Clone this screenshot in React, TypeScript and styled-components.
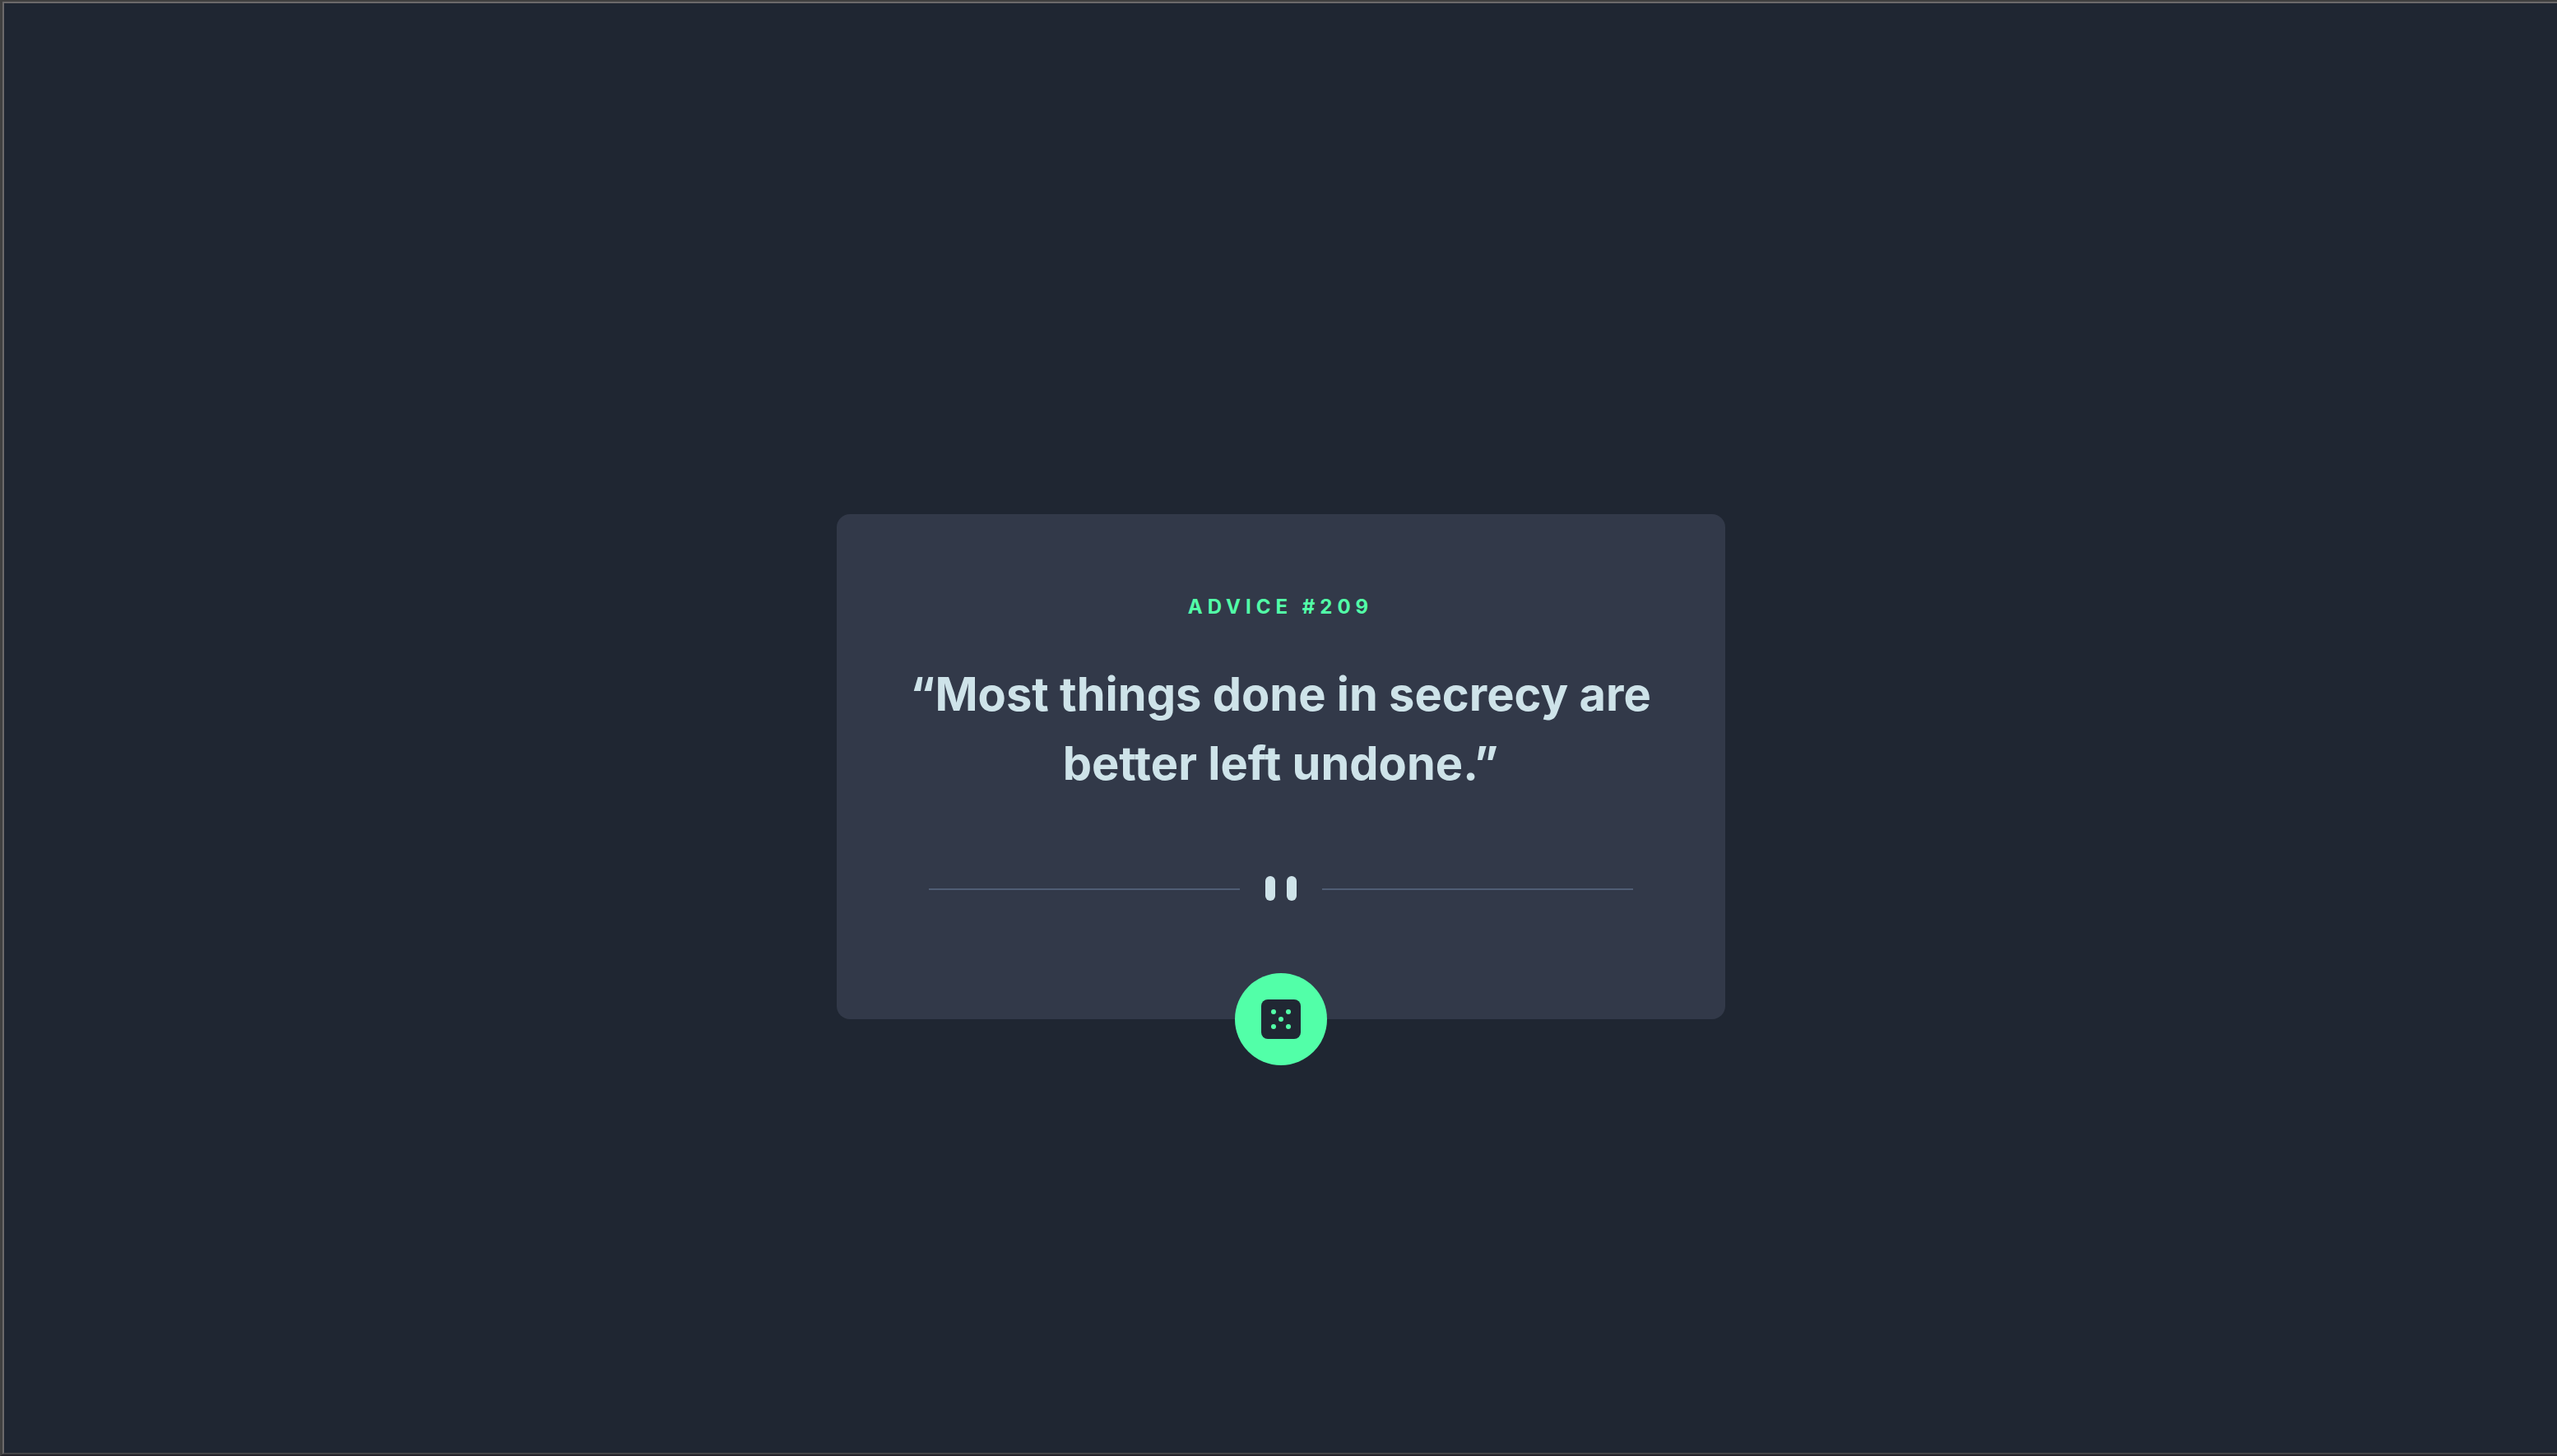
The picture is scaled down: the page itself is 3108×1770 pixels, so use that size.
import React from "react";
import styled, { createGlobalStyle } from "styled-components";

const GlobalStyle = createGlobalStyle`
  *, *::before, *::after { box-sizing: border-box; }
  body { margin: 0; background: #1f2632; font-family: Inter, "Noto Sans", sans-serif; }
`;

const Frame = styled.div`
  display: flex;
  min-height: 100vh;
  border-style: solid;
  border-width: 2px 0 2px 3px;
  border-color: #404040 transparent #24232a #404040;
`;

const Page = styled.main`
  flex: 1;
  display: flex;
  align-items: center;
  justify-content: center;
  padding-top: 94px;
  background: #1f2632;
  border-style: solid;
  border-width: 2px 0 2px 2px;
  border-color: #6b696a transparent #434446 #6b696a;
`;

const Card = styled.article`
  display: flex;
  flex-direction: column;
  align-items: center;
  width: 100%;
  max-width: 1080px;
  padding: 97px 80px 0;
  border-radius: 16px;
  background: #323949;
  text-align: center;
`;

const Label = styled.h1`
  margin: 0;
  color: #52ffa8;
  font-size: 24px;
  font-weight: 700;
  line-height: 32px;
  letter-spacing: 6px;
  text-transform: uppercase;
`;

const Quote = styled.blockquote`
  margin: 48px 0 0;
  color: #cee3e9;
  font-size: 56px;
  font-weight: 700;
  line-height: 84px;
`;

const Divider = styled.div`
  display: flex;
  align-items: center;
  align-self: stretch;
  gap: 31px;
  margin: 95px 32px 0;
`;

const Rule = styled.span`
  flex: 1;
  height: 2px;
  background: #4f5d74;
`;

const Bars = styled.span`
  display: flex;
  gap: 14px;
  padding-bottom: 2px;
`;

const Bar = styled.span`
  width: 12px;
  height: 30px;
  border-radius: 6px;
  background: #cee3e9;
`;

const DiceButton = styled.button`
  display: grid;
  place-items: center;
  width: 112px;
  height: 112px;
  margin: 86px 0 -56px;
  padding: 0;
  border: 0;
  border-radius: 50%;
  background: #52ffa8;
  cursor: pointer;
`;

const DiceIcon = () => (
  <svg width="48" height="48" viewBox="0 0 48 48" aria-hidden="true">
    <rect width="48" height="48" rx="8" fill="#202733" />
    <g fill="#52ffa8">
      <circle cx="15" cy="15" r="3" />
      <circle cx="33" cy="15" r="3" />
      <circle cx="24" cy="24" r="3" />
      <circle cx="15" cy="33" r="3" />
      <circle cx="33" cy="33" r="3" />
    </g>
  </svg>
);

export default function App() {
  return (
    <Frame>
      <GlobalStyle />
      <Page>
        <Card>
          <Label>Advice #209</Label>
          <Quote>“Most things done in secrecy are better left undone.”</Quote>
          <Divider>
            <Rule />
            <Bars>
              <Bar />
              <Bar />
            </Bars>
            <Rule />
          </Divider>
          <DiceButton type="button" aria-label="New advice">
            <DiceIcon />
          </DiceButton>
        </Card>
      </Page>
    </Frame>
  );
}
